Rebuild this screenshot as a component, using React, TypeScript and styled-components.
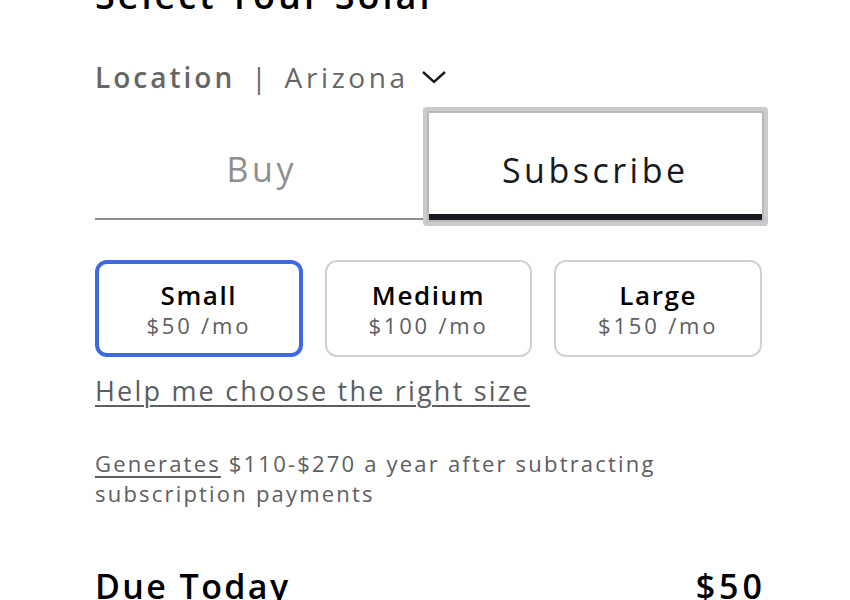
import React, { useState } from "react";
import styled, { createGlobalStyle } from "styled-components";

const GlobalStyle = createGlobalStyle`
  html, body {
    margin: 0;
    padding: 0;
    background: #ffffff;
    overflow: hidden;
  }
  body {
    font-family: "Open Sans", "Noto Sans", "Liberation Sans", sans-serif;
    color: #171a20;
  }
`;

const StyledPage = styled.div`
  width: 667px;
  margin-left: 95px;
  margin-top: -28px;
  display: flex;
  flex-direction: column;
`;

const StyledHeading = styled.h1`
  margin: 0;
  font-size: 36px;
  line-height: 48px;
  font-weight: 600;
  color: #000;
  letter-spacing: 3px;
`;

const StyledLocation = styled.div`
  margin-top: 39px;
  display: flex;
  align-items: center;
  gap: 16px;
  font-size: 28px;
  line-height: 36px;
  color: #666;
  letter-spacing: 3px;
  .label {
    font-weight: 600;
  }
  .sep {
    font-weight: 400;
    letter-spacing: 0;
    margin-right: 2px;
  }
  .value {
    display: flex;
    align-items: center;
    gap: 12px;
    letter-spacing: 3.6px;
  }
`;

const StyledTabs = styled.div`
  margin-top: 18px;
  display: grid;
  grid-template-columns: 1fr 1fr;
  border-bottom: 2px solid #8e8e8e;
  height: 105px;
`;

const StyledTab = styled.button<{ $active?: boolean }>`
  background: #fff;
  border: none;
  padding: 6px 0 0;
  font-family: inherit;
  font-size: 34px;
  font-weight: 400;
  letter-spacing: 3.5px;
  color: ${(p) => (p.$active ? "#171a20" : "#8e8e8e")};
  cursor: pointer;
  outline: none;
  ${(p) =>
    p.$active &&
    `
    margin-bottom: -2px;
    border-bottom: 6px solid #171a20;
    padding-top: 12px;
    border-radius: 1px;
    box-shadow: 0 0 0 2px #b9b9b9, 0 0 0 6px #cbcbcb;
  `}
`;

const StyledSizes = styled.div`
  margin-top: 40px;
  display: grid;
  grid-template-columns: repeat(3, 1fr);
  gap: 22px;
`;

const StyledSize = styled.button<{ $selected?: boolean }>`
  height: 97px;
  background: #fff;
  border-radius: 12px;
  border: ${(p) => (p.$selected ? "4px solid #3e6ae1" : "2px solid #d0d1d2")};
  font-family: inherit;
  display: flex;
  flex-direction: column;
  align-items: center;
  justify-content: center;
  cursor: pointer;
  padding: 0;
  .name {
    font-size: 26px;
    line-height: 32px;
    font-weight: 600;
    color: #000;
    letter-spacing: 1.6px;
  }
  .price {
    font-size: 22px;
    line-height: 28px;
    color: #5c5e62;
    letter-spacing: 2.8px;
  }
`;

const StyledHelp = styled.a`
  margin-top: 16px;
  align-self: flex-start;
  font-size: 27px;
  line-height: 36px;
  color: #5c5e62;
  text-decoration: underline;
  text-underline-offset: 4px;
  text-decoration-thickness: 2px;
  letter-spacing: 2.2px;
`;

const StyledNote = styled.p`
  margin: 39px 0 0;
  font-size: 22px;
  line-height: 30px;
  color: #5c5e62;
  letter-spacing: 2.2px;
  span {
    text-decoration: underline;
    text-underline-offset: 4px;
  }
`;

const StyledDue = styled.div`
  margin-top: 56px;
  display: flex;
  justify-content: space-between;
  font-size: 34px;
  line-height: 44px;
  font-weight: 600;
  color: #000;
  letter-spacing: 2.4px;
  span:last-child {
    letter-spacing: 4px;
    margin-right: -4px;
  }
`;

const sizes = [
  { name: "Small", price: "$50 /mo" },
  { name: "Medium", price: "$100 /mo" },
  { name: "Large", price: "$150 /mo" },
];

export default function App() {
  const [tab, setTab] = useState("Subscribe");
  const [size, setSize] = useState("Small");
  return (
    <>
      <GlobalStyle />
      <StyledPage>
        <StyledHeading>Select Your Solar</StyledHeading>
        <StyledLocation>
          <span className="label">Location</span>
          <span className="sep">|</span>
          <span className="value">
            Arizona
            <svg width="26" height="14" viewBox="0 0 26 14" fill="none">
              <path d="M2 2l11 10L24 2" stroke="#171a20" strokeWidth="2.4" />
            </svg>
          </span>
        </StyledLocation>
        <StyledTabs>
          {["Buy", "Subscribe"].map((t) => (
            <StyledTab key={t} $active={tab === t} onClick={() => setTab(t)}>
              {t}
            </StyledTab>
          ))}
        </StyledTabs>
        <StyledSizes>
          {sizes.map((s) => (
            <StyledSize
              key={s.name}
              $selected={size === s.name}
              onClick={() => setSize(s.name)}
            >
              <span className="name">{s.name}</span>
              <span className="price">{s.price}</span>
            </StyledSize>
          ))}
        </StyledSizes>
        <StyledHelp href="#">Help me choose the right size</StyledHelp>
        <StyledNote>
          <span>Generates</span> $110-$270 a year after subtracting subscription
          payments
        </StyledNote>
        <StyledDue>
          <span>Due Today</span>
          <span>$50</span>
        </StyledDue>
      </StyledPage>
    </>
  );
}
